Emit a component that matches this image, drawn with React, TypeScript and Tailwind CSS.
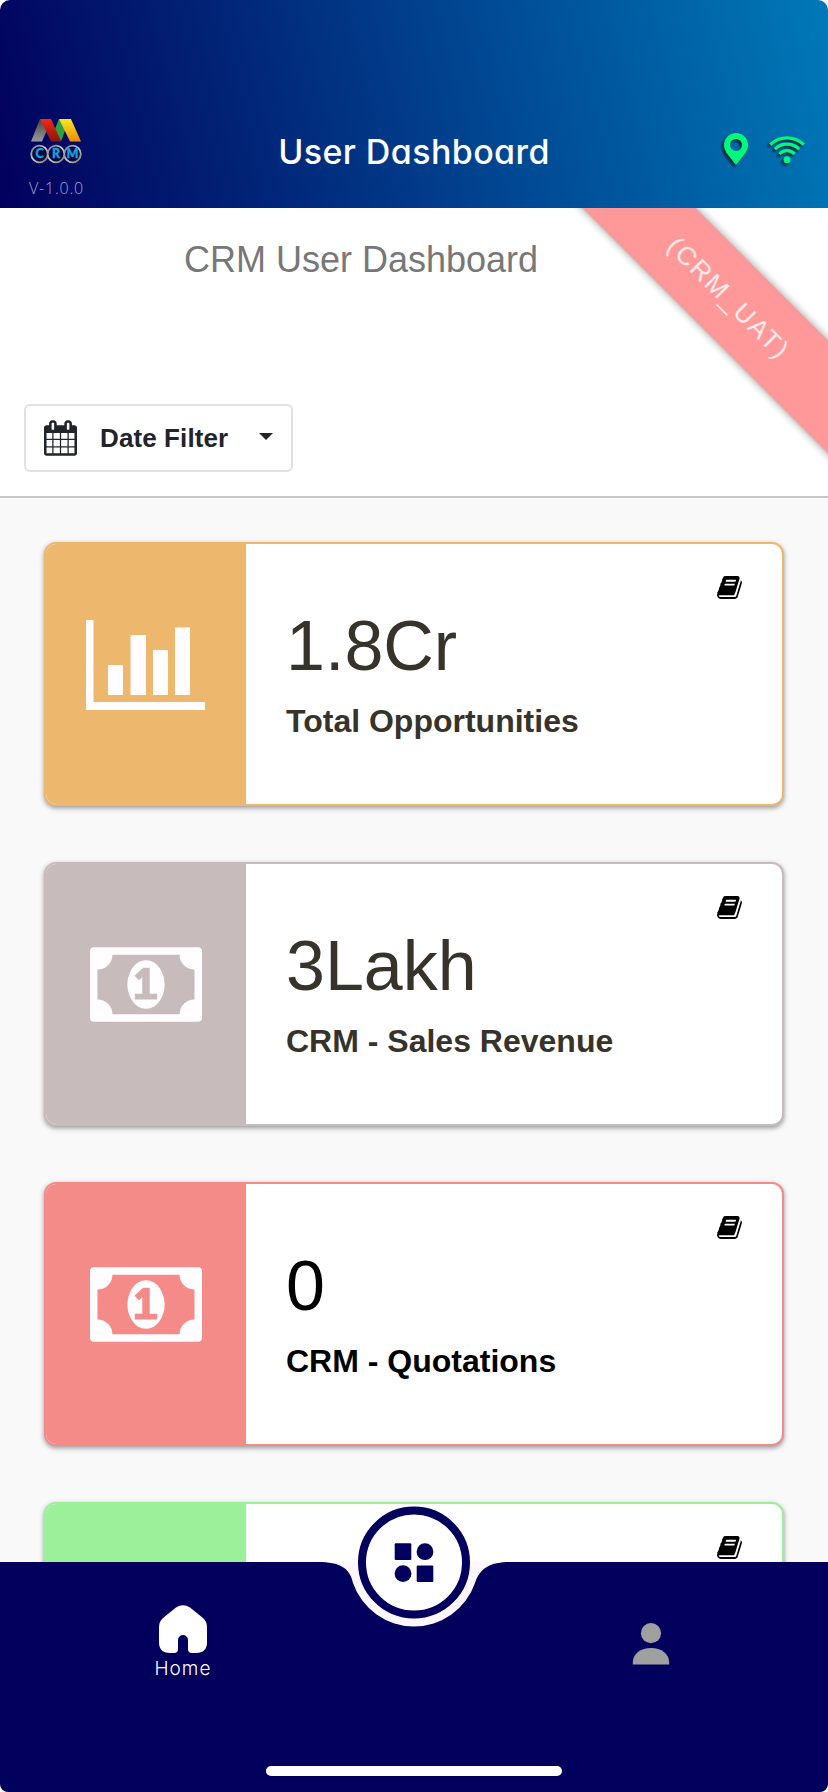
import { ReactNode } from "react";

const BarChartIcon = () => (
  <svg width="119" height="90" viewBox="0 0 119 90" fill="#fffdff">
    <path d="M0 0h7.5v82H119v8H0zM22 45h15v30H22zM44.5 15H60v60H44.5zM67 30h15v45H67zM89 7.5h15V75H89z" />
  </svg>
);

const MoneyIcon = () => (
  <svg width="112" height="75" viewBox="0 256 1920 1280" fill="#fffdff">
    <path d="M768 1152h384v-96h-128v-448h-114l-148 137 77 80q42-37 55-57h2v288h-128v96zm512-256q0 70-21 142t-59.5 134-101.5 101-138 39-138-39-101.5-101-59.5-134-21-142 21-142 59.5-134 101.5-101 138-39 138 39 101.5 101 59.5 134 21 142zm512 256v-512q-106 0-181-75t-75-181h-1152q0 106-75 181t-181 75v512q106 0 181 75t75 181h1152q0-106 75-181t181-75zm128-832v1152q0 26-19 45t-45 19h-1792q-26 0-45-19t-19-45v-1152q0-26 19-45t45-19h1792q26 0 45 19t19 45z" />
  </svg>
);

const BookIcon = () => (
  <svg width="25" height="23" viewBox="0 128 1664 1536" fill="#000">
    <path d="M1639 478q40 57 18 129l-275 906q-19 64-76.5 107.5t-122.5 43.5h-923q-77 0-148.5-53.5t-99.5-131.5q-24-67-2-127 0-4 3-27t4-37q1-8-3-21.5t-3-19.5q2-11 8-21t16.5-23.5 16.5-23.5q23-38 45-91.5t30-91.5q3-10 .5-30t-.5-28q3-11 17-28t17-23q21-36 42-92t25-90q1-9-2.5-32t.5-28q4-13 22-30.5t22-22.5q19-26 42.5-84.5t27.5-96.5q1-8-3-25.5t-2-26.5q2-8 9-18t18-23 17-21q8-12 16.5-30.5t15-35 16-36 19.5-32 26.5-23.5 36-11.5 47.5 5.5l-1 3q38-9 51-9h761q74 0 114 56t18 130l-274 906q-36 119-71.5 153.5t-128.5 34.5h-869q-27 0-38 15-11 16-1 43 24 70 144 70h923q29 0 56-15.5t35-41.5l300-987q7-22 5-57 38 15 59 43zm-1064 2q-4 13 2 22.5t20 9.5h608q13 0 25.5-9.5t16.5-22.5l21-64q4-13-2-22.5t-20-9.5h-608q-13 0-25.5 9.5t-16.5 22.5zm-83 256q-4 13 2 22.5t20 9.5h608q13 0 25.5-9.5t16.5-22.5l21-64q4-13-2-22.5t-20-9.5h-608q-13 0-25.5 9.5t-16.5 22.5z" />
  </svg>
);

const CalendarIcon = () => (
  <svg width="33" height="36" viewBox="64 0 1664 1792" fill="#212529">
    <path d="M192 1664h288v-288h-288v288zm352 0h320v-288h-320v288zm-352-352h288v-320h-288v320zm352 0h320v-320h-320v320zm-352-384h288v-288h-288v288zm736 736h320v-288h-320v288zm-384-736h320v-288h-320v288zm768 736h288v-288h-288v288zm-384-352h320v-320h-320v320zm-352-864v-288q0-13-9.5-22.5t-22.5-9.5h-64q-13 0-22.5 9.5t-9.5 22.5v288q0 13 9.5 22.5t22.5 9.5h64q13 0 22.5-9.5t9.5-22.5zm736 864h288v-320h-288v320zm-384-384h320v-288h-320v288zm384 0h288v-288h-288v288zm32-480v-288q0-13-9.5-22.5t-22.5-9.5h-64q-13 0-22.5 9.5t-9.5 22.5v288q0 13 9.5 22.5t22.5 9.5h64q13 0 22.5-9.5t9.5-22.5zm384-64v1280q0 52-38 90t-90 38h-1408q-52 0-90-38t-38-90v-1280q0-52 38-90t90-38h128v-96q0-66 47-113t113-47h64q66 0 113 47t47 113v96h384v-96q0-66 47-113t113-47h64q66 0 113 47t47 113v96h128q52 0 90 38t38 90z" />
  </svg>
);

const Logo = () => (
  <svg width="52" height="46" viewBox="0 0 52 46">
    <defs>
      <linearGradient id="gray" x1="0" y1="1" x2="0" y2="0">
        <stop offset="0" stopColor="#999" />
        <stop offset="1" stopColor="#444" />
      </linearGradient>
      <linearGradient id="red" x1="0" y1="0" x2="0" y2="1">
        <stop offset="0" stopColor="#f52a12" />
        <stop offset="1" stopColor="#8a1210" />
      </linearGradient>
      <linearGradient id="yellow" x1="0" y1="0" x2="0" y2="1">
        <stop offset="0" stopColor="#f6e81c" />
        <stop offset="1" stopColor="#ee8a0c" />
      </linearGradient>
      <linearGradient id="ring" x1="0" y1="0" x2="1" y2="1">
        <stop offset="0" stopColor="#777" />
        <stop offset="0.5" stopColor="#ccc" />
        <stop offset="1" stopColor="#777" />
      </linearGradient>
    </defs>
    <path d="M10 1L1 23.5h11L17 12z" fill="url(#gray)" />
    <path d="M29 1l-4 10 6 12.500L36 10z" fill="#2da044" />
    <path d="M10 1h11l10 22.500H21z" fill="url(#red)" />
    <path d="M29 1h12l10 22.500H40z" fill="url(#yellow)" />
    <g fill="#08083f" stroke="url(#ring)" strokeWidth="1.8">
      <circle cx="9.5" cy="36" r="8.3" />
      <circle cx="42.5" cy="36" r="8.3" />
      <circle cx="26" cy="36" r="8.3" />
    </g>
    <g
      fill="#12a5e6"
      stroke="#12a5e6"
      strokeWidth="0.3"
      fontFamily="Lato, sans-serif"
      fontSize="12.5"
      fontWeight="900"
      textAnchor="middle"
    >
      <text x="9.5" y="40.3">C</text>
      <text x="26" y="40.3">R</text>
      <text x="42.5" y="40.3">M</text>
    </g>
  </svg>
);

const PinIcon = () => (
  <svg
    className="overflow-visible drop-shadow-[-1.5px_2px_1px_rgba(0,0,0,0.65)]"
    width="24"
    height="32"
    viewBox="0 0 24 32"
    fill="#00f97a"
  >
    <path
      fillRule="evenodd"
      d="M12 0C5.3 0 0 5.3 0 12c0 3 1 5.5 2.5 8L12 32l9.5-12c1.5-2.5 2.500-5 2.500-8 0-6.700-5.300-12-12-12zm0 6a6 6 0 1 1 0 12 6 6 0 0 1 0-12z"
    />
  </svg>
);

const WifiIcon = () => (
  <svg
    className="overflow-visible drop-shadow-[-1.5px_2px_1px_rgba(0,0,0,0.65)]"
    width="36"
    height="28"
    viewBox="0 0 36 28"
  >
    <g fill="none" stroke="#00f97a" strokeWidth="3.2">
      <path d="M1.2 8.6Q8.5 1.9 18 1.9T34.8 8.6" />
      <path d="M5.8 13.2Q11 8.2 18 8.2T30.2 13.2" />
      <path d="M10.400 18Q13.500 14.600 18 14.600T25.600 18" />
    </g>
    <circle cx="18" cy="23.7" r="3.500" fill="#00f97a" />
  </svg>
);

const Header = () => (
  <header className="flex h-[208px] items-start justify-between rounded-t-[10px] bg-linear-[76deg] from-[#02005c] to-[#0079b8] pt-[118px]">
    <div className="ml-[30px] flex w-[159px] flex-col">
      <Logo />
      <span className="mt-[13px] -ml-px font-['Open_Sans',sans-serif] text-base leading-[22px] font-light tracking-[0.8px] text-[#a3a4d4]">
        V-1.0.0
      </span>
    </div>
    <h1 className="mt-[13px] font-[Inter,sans-serif] text-[34px] leading-[42px] font-medium tracking-[0.4px] whitespace-nowrap text-white [font-feature-settings:'cv11']">
      User Dashboard
    </h1>
    <div className="mt-[15px] mr-[23px] flex w-[166px] items-start justify-end gap-[21px]">
      <PinIcon />
      <div className="mt-[3px]">
        <WifiIcon />
      </div>
    </div>
  </header>
);

type Stat = {
  value: string;
  label: string;
  panel: string;
  border: string;
  text: string;
  icon: ReactNode;
};

const stats: Stat[] = [
  {
    value: "1.8Cr",
    label: "Total Opportunities",
    panel: "bg-[#edb86d]",
    border: "border-[#edb86d]",
    text: "text-[#37332b]",
    icon: <BarChartIcon />,
  },
  {
    value: "3Lakh",
    label: "CRM - Sales Revenue",
    panel: "bg-[#c7bcbb]",
    border: "border-[#c7bcbb]",
    text: "text-[#37332b]",
    icon: <MoneyIcon />,
  },
  {
    value: "0",
    label: "CRM - Quotations",
    panel: "bg-[#f48b89]",
    border: "border-[#f48b89]",
    text: "text-black",
    icon: <MoneyIcon />,
  },
  {
    value: "",
    label: "",
    panel: "bg-[#9cf09a]",
    border: "border-[#9cf09a]",
    text: "text-black",
    icon: null,
  },
];

const StatCard = ({ value, label, panel, border, text, icon }: Stat) => (
  <div
    className={`flex h-[264px] shrink-0 overflow-hidden rounded-xl border-2 bg-white shadow-[0_2px_5px_rgba(0,0,0,0.4)] ${border}`}
  >
    <div className={`flex w-[200px] justify-center pr-px ${panel}`}>
      <div className="flex h-[241px] items-center">{icon}</div>
    </div>
    <div className={`flex-1 pl-10 ${text}`}>
      <div className="flex h-[62px] justify-end pt-8 pr-10">
        <BookIcon />
      </div>
      <p className="h-[80px] text-[70px] leading-[80px]">{value}</p>
      <p className="mt-[17px] text-[32px] leading-9 font-bold">{label}</p>
    </div>
  </div>
);

const BottomNav = () => (
  <nav className="relative h-[230px] shrink-0 rounded-b-[8px] bg-[#02005c]">
    <svg
      className="absolute -top-[57px] left-[314px]"
      width="200"
      height="124"
      viewBox="314 1505 200 124"
    >
      <path
        d="M318 1562C340 1562 350 1568 353 1583A64.500 64.500 0 0 0 475 1583C480 1568 490 1562 510 1562z"
        fill="#fdf7fd"
      />
      <circle cx="414" cy="1562.5" r="52" fill="#fff" stroke="#02005c" strokeWidth="8" />
      <g fill="#02005c">
        <rect x="394.7" y="1543.3" width="16.6" height="16.6" rx="1" />
        <circle cx="425" cy="1551.7" r="8.4" />
        <circle cx="403" cy="1573.6" r="8.4" />
        <rect x="416.7" y="1565.4" width="16.6" height="16.6" rx="1" />
      </g>
    </svg>
    <div className="flex h-[204px] justify-between pt-[43px]">
      <div className="ml-[133px] flex w-[100px] flex-col items-center">
        <svg width="48" height="48" viewBox="0 0 48 48" fill="#fff">
          <path d="M17 2.5Q24-2.2 31 2.5L44 13Q48 16.500 48 22V37Q48 48 37 48H33Q29 48 29 44V35A5 5 0 0 0 19 35V44Q19 48 15 48H11Q0 48 0 37V22Q0 16.500 4 13z" />
        </svg>
        <span className="mt-1 font-[Inter,sans-serif] text-[19px] leading-6 font-light tracking-[1px] text-white">
          Home
        </span>
      </div>
      <svg className="mt-[18px] mr-[158px]" width="38" height="42" viewBox="0 0 38 42" fill="#a0a0a0">
        <circle cx="19" cy="10.2" r="10.1" />
        <path d="M.8 41.5V39.5C.8 31 8.5 25 19 25S37.200 31 37.200 39.500V41.500z" />
      </svg>
    </div>
    <div className="mx-auto h-2.5 w-[296px] rounded-full bg-white" />
  </nav>
);

const Ribbon = () => (
  <div className="absolute top-[50px] left-[479px] flex h-20 w-[500px] rotate-45 items-center justify-center bg-[#ff9999] text-[26px] tracking-[2.2px] text-white/80 shadow-[0_0_9px_rgba(0,0,0,0.4)]">
    (CRM_UAT)
  </div>
);

export default function App() {
  return (
    <div className="flex h-[1792px] w-[828px] flex-col overflow-hidden bg-white font-['Liberation_Sans',Arial,sans-serif]">
      <Header />
      <main className="relative flex min-h-0 flex-1 flex-col overflow-hidden bg-[#f9f9f9]">
        <section className="flex h-[290px] shrink-0 flex-col items-start border-b-2 border-[#c8c8c8] bg-white">
          <h2 className="mt-[31px] ml-[184px] text-[36px] leading-[42px] text-[#777]">
            CRM User Dashboard
          </h2>
          <button className="mt-[123px] ml-6 flex h-[68px] w-[269px] items-center rounded-md border-2 border-[#dee2e6] pl-[18px] text-[26px] font-bold text-[#212529]">
            <CalendarIcon />
            <span className="ml-[23px] tracking-[0.1px]">Date Filter</span>
            <span className="mb-1 ml-[31px] border-x-[7px] border-t-[7px] border-x-transparent border-t-[#212529]" />
          </button>
        </section>
        <Ribbon />
        <section className="flex flex-col gap-14 px-11 pt-11">
          {stats.map((stat) => (
            <StatCard key={stat.panel} {...stat} />
          ))}
        </section>
      </main>
      <BottomNav />
    </div>
  );
}
